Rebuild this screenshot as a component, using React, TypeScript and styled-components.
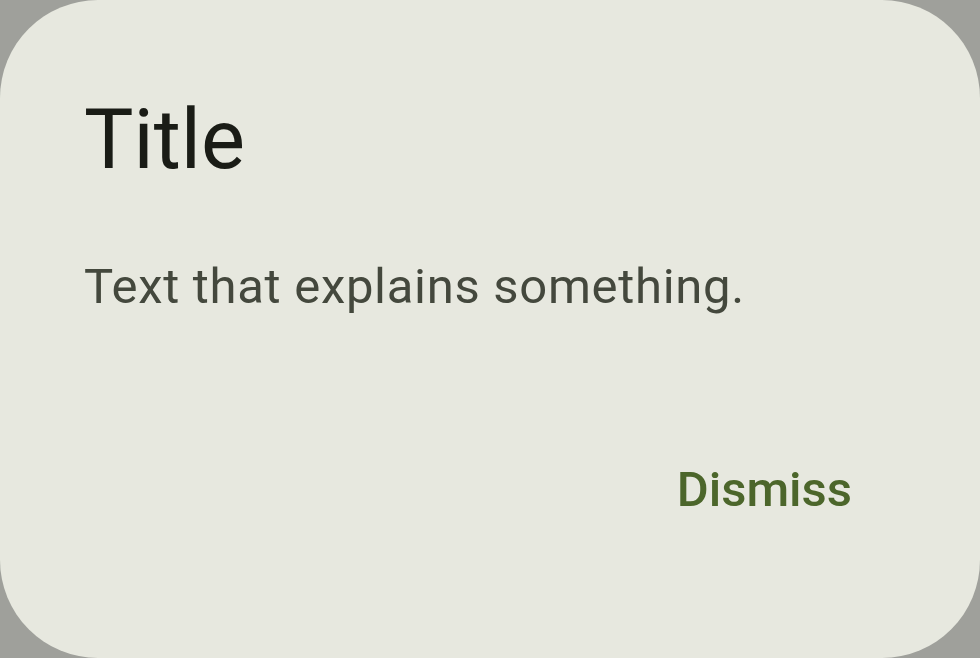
import styled, { createGlobalStyle } from 'styled-components';

const Global = createGlobalStyle`
  html, body {
    margin: 0;
    padding: 0;
    background: #9fa09b;
    font-family: Roboto, "Noto Sans", sans-serif;
  }
`;

const Screen = styled.div`
  width: 980px;
  height: 658px;
  background: #9fa09b;
  display: flex;
`;

const Dialog = styled.div`
  flex: 1;
  background: #e7e8df;
  border-radius: 98px;
  padding: 84px;
  display: flex;
  flex-direction: column;
  box-sizing: border-box;
`;

const Title = styled.h1`
  margin: 0;
  font-size: 83px;
  line-height: 112px;
  font-weight: 400;
  color: #1a1c16;
`;

const Body = styled.p`
  margin: 56px 0 0;
  font-size: 49px;
  line-height: 70px;
  letter-spacing: 0.7px;
  font-weight: 400;
  color: #44483d;
`;

const Actions = styled.div`
  margin-top: 84px;
  display: flex;
  justify-content: flex-end;
`;

const TextButton = styled.button`
  height: 168px;
  padding: 0 44px 0 42px;
  border: none;
  background: transparent;
  font-family: Roboto, "Noto Sans", sans-serif;
  font-size: 49px;
  line-height: 70px;
  letter-spacing: 0;
  font-weight: 500;
  color: #4c662b;
  cursor: pointer;
`;

export default function App() {
  return (
    <>
      <Global />
      <Screen>
        <Dialog>
          <Title>Title</Title>
          <Body>Text that explains something.</Body>
          <Actions>
            <TextButton>Dismiss</TextButton>
          </Actions>
        </Dialog>
      </Screen>
    </>
  );
}
